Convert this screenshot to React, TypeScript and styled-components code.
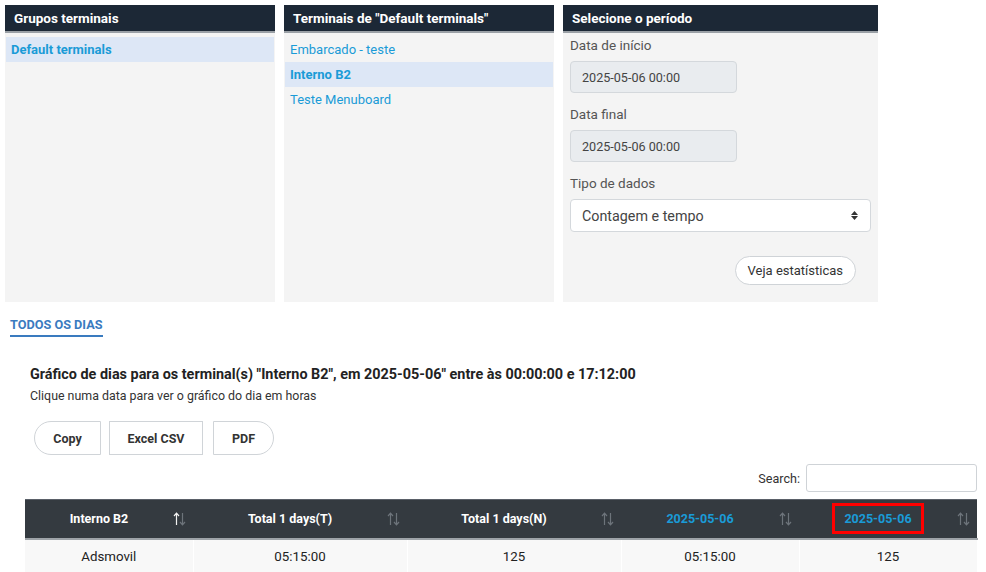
import styled, { createGlobalStyle } from 'styled-components';

const GlobalStyle = createGlobalStyle`
  html, body {
    margin: 0;
    padding: 0;
    background: #ffffff;
    font-family: Roboto, "Liberation Sans", Arial, sans-serif;
    color: #212529;
  }
  * { box-sizing: border-box; }
`;

const Page = styled.div`
  width: 986px;
  height: 572px;
  overflow: hidden;
  padding: 5px 0 0 5px;
`;

const TopRow = styled.div`
  display: flex;
  gap: 9px;
  height: 297px;
`;

const Panel = styled.div<{ $width: number }>`
  width: ${(p) => p.$width}px;
  background: #f4f4f4;
  display: flex;
  flex-direction: column;
  overflow: hidden;
`;

const PanelHeader = styled.div`
  flex-shrink: 0;
  height: 28px;
  background: #1c2836;
  border-bottom: 2px solid #9aa0a6;
  color: #ffffff;
  font-weight: 700;
  font-size: 13.5px;
  padding: 0 9px;
  display: flex;
  align-items: center;
`;

const List = styled.div`
  padding: 4px 1px 0;
  display: flex;
  flex-direction: column;
`;

const ListItem = styled.div<{ $active?: boolean }>`
  height: 25px;
  display: flex;
  align-items: center;
  padding: 0 5px;
  font-size: 13px;
  color: #1a9bd7;
  font-weight: ${(p) => (p.$active ? 700 : 400)};
  background: ${(p) => (p.$active ? '#dde7f6' : 'transparent')};
`;

const Form = styled.div`
  padding: 4px 7px 0;
  display: flex;
  flex-direction: column;
`;

const Label = styled.div`
  font-size: 13.5px;
  color: #555;
  height: 17px;
  line-height: 17px;
  margin-bottom: 7px;
`;

const DateInput = styled.div`
  width: 167px;
  height: 32px;
  background: #e9ecef;
  border: 1px solid #d4d8dc;
  border-radius: 4px;
  font-size: 12.6px;
  color: #444;
  padding: 0 11px;
  display: flex;
  align-items: center;
  margin-bottom: 13px;
`;

const Select = styled.div`
  width: 301px;
  height: 33px;
  background: #ffffff;
  border: 1px solid #d4d8dc;
  border-radius: 4px;
  font-size: 14.3px;
  color: #444;
  padding: 0 11px;
  display: flex;
  align-items: center;
  justify-content: space-between;
`;

const Caret = styled.span`
  display: flex;
  flex-direction: column;
  gap: 1px;
  margin-right: 1px;
`;

const Actions = styled.div`
  display: flex;
  justify-content: flex-end;
  padding: 24px 15px 0 0;
`;

const PillButton = styled.button`
  height: 29px;
  padding: 0 12px;
  border: 1px solid #cfd3d7;
  border-radius: 15px;
  background: #ffffff;
  font-family: inherit;
  font-size: 13px;
  color: #333;
`;

const Tabs = styled.div`
  padding: 12px 0 0 5px;
  height: 41px;
`;

const Tab = styled.div`
  display: inline-block;
  font-size: 12.7px;
  font-weight: 700;
  color: #3a7bbf;
  padding-bottom: 3px;
  border-bottom: 2px solid #3a7bbf;
`;

const Content = styled.div`
  padding: 23px 9px 0 20px;
`;

const Title = styled.div`
  font-size: 14.4px;
  font-weight: 700;
  color: #222;
  padding-left: 5px;
  line-height: 18px;
`;

const Subtitle = styled.div`
  font-size: 12.4px;
  color: #333;
  padding-left: 5px;
  line-height: 16px;
  margin-top: 4px;
`;

const ButtonRow = styled.div`
  display: flex;
  gap: 8px;
  padding: 17px 0 0 9px;
`;

const ExportButton = styled.button<{ $pos: 'first' | 'mid' | 'last'; $width: number }>`
  width: ${(p) => p.$width}px;
  height: 34px;
  border: 1px solid #d0d4d8;
  background: #ffffff;
  font-family: inherit;
  font-size: 12.5px;
  font-weight: 700;
  color: #333;
  margin-left: ${(p) => (p.$pos === 'last' ? '2px' : '0')};
  border-radius: ${(p) =>
    p.$pos === 'first' ? '17px 0 0 17px' : p.$pos === 'last' ? '0 17px 17px 0' : '0'};
`;

const SearchRow = styled.div`
  display: flex;
  justify-content: flex-end;
  align-items: center;
  gap: 6px;
  margin-top: 9px;
  font-size: 12.6px;
  color: #333;
`;

const SearchInput = styled.div`
  width: 171px;
  height: 28px;
  border: 1px solid #cfd3d7;
  border-radius: 3px;
  background: #fff;
`;

const Table = styled.table`
  width: 952px;
  margin: 7px 0 0 0;
  border-collapse: collapse;
  table-layout: fixed;
`;

const Th = styled.th<{ $date?: boolean }>`
  height: 39px;
  background: #343a40;
  border-top: 1px solid #5a6068;
  border-bottom: 2px solid #9ea3a8;
  color: ${(p) => (p.$date ? '#1a9bd7' : '#ffffff')};
  font-size: 12.5px;
  font-weight: 700;
  position: relative;
  padding: 0 30px 0 10px;
  text-align: center;
`;

const Highlight = styled.span`
  display: inline-block;
  border: 3px solid #ff0000;
  padding: 5px 9px;
`;

const SortIcon = styled.svg`
  position: absolute;
  right: 7px;
  top: 50%;
  transform: translateY(-50%);
`;

const Td = styled.td`
  height: 34px;
  background: #f8f8f8;
  border-right: 1px solid #ffffff;
  text-align: center;
  font-size: 13.3px;
  color: #222;
`;

const columns = [
  { label: 'Interno B2', width: 168, up: true },
  { label: 'Total 1 days(T)', width: 214 },
  { label: 'Total 1 days(N)', width: 214 },
  { label: '2025-05-06', width: 178, date: true },
  { label: '2025-05-06', width: 178, date: true, boxed: true },
];

const row = ['Adsmovil', '05:15:00', '125', '05:15:00', '125'];

function SortArrows({ up }: { up?: boolean }) {
  const dim = '#6d747b';
  return (
    <SortIcon width="13" height="14" viewBox="0 0 13 14" fill="none" strokeWidth="1.2">
      <path d="M3.5 13 V1.5 M1 4 L3.5 1.2 L6 4" stroke={up ? '#f2f2f2' : dim} />
      <path d="M9.5 1 V12.5 M7 10 L9.5 12.8 L12 10" stroke={dim} />
    </SortIcon>
  );
}

export default function App() {
  return (
    <Page>
      <GlobalStyle />
      <TopRow>
        <Panel $width={270}>
          <PanelHeader>Grupos terminais</PanelHeader>
          <List>
            <ListItem $active>Default terminals</ListItem>
          </List>
        </Panel>
        <Panel $width={270}>
          <PanelHeader>Terminais de "Default terminals"</PanelHeader>
          <List>
            <ListItem>Embarcado - teste</ListItem>
            <ListItem $active>Interno B2</ListItem>
            <ListItem>Teste Menuboard</ListItem>
          </List>
        </Panel>
        <Panel $width={315}>
          <PanelHeader>Selecione o período</PanelHeader>
          <Form>
            <Label>Data de início</Label>
            <DateInput>2025-05-06 00:00</DateInput>
            <Label>Data final</Label>
            <DateInput>2025-05-06 00:00</DateInput>
            <Label>Tipo de dados</Label>
            <Select>
              Contagem e tempo
              <Caret>
                <svg width="7" height="4" viewBox="0 0 7 4"><path d="M0 4 L3.5 0 L7 4 Z" fill="#333" /></svg>
                <svg width="7" height="4" viewBox="0 0 7 4"><path d="M0 0 L3.5 4 L7 0 Z" fill="#333" /></svg>
              </Caret>
            </Select>
            <Actions>
              <PillButton>Veja estatísticas</PillButton>
            </Actions>
          </Form>
        </Panel>
      </TopRow>
      <Tabs>
        <Tab>TODOS OS DIAS</Tab>
      </Tabs>
      <Content>
        <Title>Gráfico de dias para os terminal(s) "Interno B2", em 2025-05-06" entre às 00:00:00 e 17:12:00</Title>
        <Subtitle>Clique numa data para ver o gráfico do dia em horas</Subtitle>
        <ButtonRow>
          <ExportButton $pos="first" $width={67}>Copy</ExportButton>
          <ExportButton $pos="mid" $width={94}>Excel CSV</ExportButton>
          <ExportButton $pos="last" $width={61}>PDF</ExportButton>
        </ButtonRow>
        <SearchRow>
          Search:
          <SearchInput />
        </SearchRow>
        <Table>
          <colgroup>
            {columns.map((c, i) => (
              <col key={i} style={{ width: c.width }} />
            ))}
          </colgroup>
          <thead>
            <tr>
              {columns.map((c, i) => (
                <Th key={i} $date={c.date}>
                  {c.boxed ? <Highlight>{c.label}</Highlight> : c.label}
                  <SortArrows up={c.up} />
                </Th>
              ))}
            </tr>
          </thead>
          <tbody>
            <tr>
              {row.map((v, i) => (
                <Td key={i}>{v}</Td>
              ))}
            </tr>
          </tbody>
        </Table>
      </Content>
    </Page>
  );
}
